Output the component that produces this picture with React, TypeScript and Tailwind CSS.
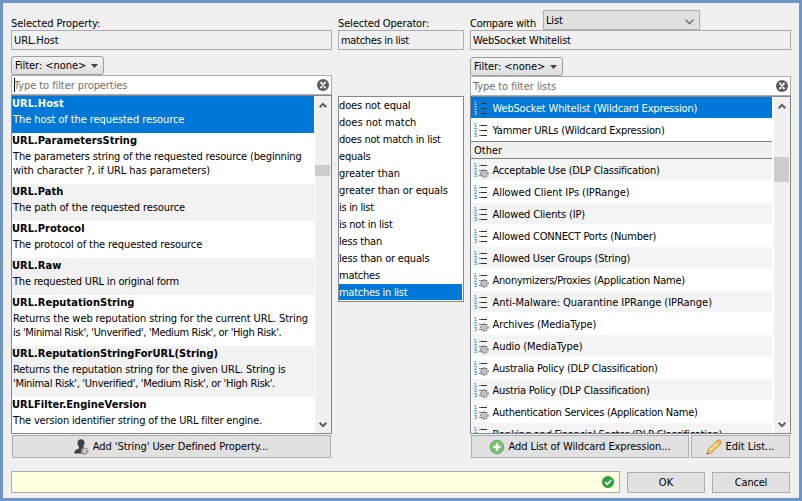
import type { ReactNode } from "react";

type Line = { text: string; cls: string };
type Property = { name: string; lines: Line[] };

const properties: Property[] = [
  { name: "URL.Host", lines: [{ text: "The host of the requested resource", cls: "tracking-[-0.08px]" }] },
  {
    name: "URL.ParametersString",
    lines: [
      { text: "The parameters string of the requested resource (beginning", cls: "tracking-[-0.16px]" },
      { text: "with character ?, if URL has parameters)", cls: "tracking-[-0.08px]" },
    ],
  },
  { name: "URL.Path", lines: [{ text: "The path of the requested resource", cls: "tracking-[-0.09px]" }] },
  { name: "URL.Protocol", lines: [{ text: "The protocol of the requested resource", cls: "tracking-[-0.1px]" }] },
  { name: "URL.Raw", lines: [{ text: "The requested URL in original form", cls: "tracking-[-0.2px]" }] },
  {
    name: "URL.ReputationString",
    lines: [
      { text: "Returns the web reputation string for the current URL. String", cls: "tracking-[-0.09px]" },
      { text: "is 'Minimal Risk', 'Unverified', 'Medium Risk', or 'High Risk'.", cls: "tracking-[-0.36px]" },
    ],
  },
  {
    name: "URL.ReputationStringForURL(String)",
    lines: [
      { text: "Returns the reputation string for the given URL. String is", cls: "tracking-[-0.12px]" },
      { text: "'Minimal Risk', 'Unverified', 'Medium Risk', or 'High Risk'.", cls: "tracking-[-0.3px]" },
    ],
  },
  {
    name: "URLFilter.EngineVersion",
    lines: [{ text: "The version identifier string of the URL filter engine.", cls: "tracking-[-0.16px]" }],
  },
];

const operators: Line[] = [
  { text: "does not equal", cls: "tracking-[-0.15px]" },
  { text: "does not match", cls: "" },
  { text: "does not match in list", cls: "tracking-[-0.25px]" },
  { text: "equals", cls: "tracking-[-0.2px]" },
  { text: "greater than", cls: "tracking-[-0.08px]" },
  { text: "greater than or equals", cls: "tracking-[-0.1px]" },
  { text: "is in list", cls: "tracking-[-0.3px]" },
  { text: "is not in list", cls: "tracking-[-0.25px]" },
  { text: "less than", cls: "tracking-[-0.2px]" },
  { text: "less than or equals", cls: "tracking-[-0.18px]" },
  { text: "matches", cls: "tracking-[-0.25px]" },
  { text: "matches in list", cls: "tracking-[-0.27px]" },
];

const lists: (Line & { gear?: boolean })[] = [
  { text: "Acceptable Use (DLP Classification)", cls: "tracking-[-0.23px]", gear: true },
  { text: "Allowed Client IPs (IPRange)", cls: "tracking-[-0.06px]" },
  { text: "Allowed Clients (IP)", cls: "tracking-[-0.15px]" },
  { text: "Allowed CONNECT Ports (Number)", cls: "tracking-[-0.18px]" },
  { text: "Allowed User Groups (String)", cls: "tracking-[-0.2px]" },
  { text: "Anonymizers/Proxies (Application Name)", cls: "tracking-[-0.23px]", gear: true },
  { text: "Anti-Malware: Quarantine IPRange (IPRange)", cls: "tracking-[-0.04px]" },
  { text: "Archives (MediaType)", cls: "tracking-[-0.08px]", gear: true },
  { text: "Audio (MediaType)", cls: "tracking-[-0.08px]", gear: true },
  { text: "Australia Policy (DLP Classification)", cls: "tracking-[-0.24px]", gear: true },
  { text: "Austria Policy (DLP Classification)", cls: "tracking-[-0.23px]", gear: true },
  { text: "Authentication Services (Application Name)", cls: "tracking-[-0.26px]", gear: true },
  { text: "Banking and Financial Sector (DLP Classification)", cls: "tracking-[-0.25px]" },
];

function Gear({ x, y, r, fill }: { x: number; y: number; r: number; fill: string }) {
  return (
    <g transform={`translate(${x} ${y})`}>
      <circle r={r - 0.7} fill="none" stroke="#808080" strokeWidth="1.4" strokeDasharray="1.4 1.3" />
      <circle r={r - 1.3} fill={fill} stroke="#8c8c8c" strokeWidth="0.8" />
      <circle r="1" fill="#fff" stroke="#777" strokeWidth="0.6" />
    </g>
  );
}

function ListIcon({ gear }: { gear?: boolean }) {
  return (
    <svg width="16" height="16" viewBox="0 0 16 16" className="shrink-0">
      <g fill="none" stroke="#7fb0e8" strokeWidth="1" shapeRendering="crispEdges">
        <path d="M0 1.5h2M1.5 1v3M0 4.5h3" />
        <path d="M0 6.5h3M2 7.5h1M1 8.5h1M0 9.5h3" />
        <path d="M0 11.5h3M1 12.5h2M2 13.5h1M0 14.5h3" />
      </g>
      <g strokeWidth="1" shapeRendering="crispEdges">
        <path d="M5 3.5h2M5 8.5h2M5 13.5h2" stroke="#7c7c7c" />
        <path d="M7 3.5h6M7 8.5h6M7 13.5h6" stroke="#303030" />
      </g>
      {gear && <Gear x={10.3} y={11.5} r={4.4} fill="#d0d0d0" />}
    </svg>
  );
}

function Clear() {
  return (
    <svg width="12" height="12" viewBox="0 0 12 12" className="shrink-0">
      <circle cx="6" cy="6" r="6" fill="#5c5c5c" />
      <path d="M3.9 3.7L8.1 8.3M8.1 3.7L3.9 8.3M3.2 3.5h2M6.8 3.5h2M3.2 8.5h2M6.8 8.5h2" stroke="#fff" strokeWidth="1.3" />
    </svg>
  );
}

function Arrow({ down }: { down?: boolean }) {
  return (
    <svg width="8" height="6" viewBox="0 0 8 6" className="mx-auto shrink-0">
      <path d={down ? "M0.7 0.8L4 4.1L7.3 0.8" : "M0.7 5.2L4 1.9L7.3 5.2"} fill="none" stroke="#5a5a5a" strokeWidth="2" />
    </svg>
  );
}

function Box({ children }: { children: ReactNode }) {
  return <div className="h-5 border border-[#abadb3] pl-[2px] leading-5">{children}</div>;
}

function FilterButton() {
  return (
    <div className="flex h-[19px] w-[93px] items-center rounded-[3px] border border-[#a0a0a0] bg-linear-to-b from-[#f2f2f2] to-[#dedede] pl-[3px]">
      <span className="tracking-[-0.05px]">Filter: &lt;none&gt;</span>
      <svg width="7" height="4" viewBox="0 0 7 4" className="ml-auto mr-[5px]">
        <path d="M0 0h7L3.5 4z" fill="#444" />
      </svg>
    </div>
  );
}

function Search({ text, caret }: { text: string; caret?: boolean }) {
  return (
    <div className="flex h-5 items-center border border-[#abadb3] bg-white pl-[2px] pr-[2px] text-[#707070]">
      {caret && <span className="-mr-px h-[14px] w-px bg-black" />}
      <span className="grow pt-px tracking-[-0.08px]">{text}</span>
      <Clear />
    </div>
  );
}

function ScrollBar({ lead, thumb }: { lead: string; thumb: string }) {
  return (
    <div className="flex w-4 shrink-0 flex-col justify-between bg-[#f0f0f0] pb-[5px] pr-px pt-[6px]">
      <div>
        <Arrow />
        <div className={lead} />
        <div className={`bg-[#cdcdcd] ${thumb}`} />
      </div>
      <Arrow down />
    </div>
  );
}

const button = "flex items-center justify-center border border-[#adadad] bg-[#e1e1e1]";

export default function App() {
  return (
    <div className="h-[501px] w-[802px] overflow-hidden whitespace-nowrap border-[3px] border-[#7094c4] bg-[#f0f0f0] pl-2 font-['DejaVu_Sans_Condensed','DejaVu_Sans',sans-serif] text-[11px] leading-[14px] text-black [font-stretch:condensed]">
      <div className="flex h-[468px]">
        <section className="w-[321px] pt-[13px]">
          <div className="h-[14px] leading-4 tracking-[-0.06px]">Selected Property:</div>
          <Box>
            <span className="tracking-[-0.1px]">URL.Host</span>
          </Box>
          <div className="pt-[6px]">
            <FilterButton />
          </div>
          <Search text="Type to filter properties" caret />
          <div className="flex h-[339px] overflow-hidden border border-[#828790] bg-white">
            <div className="mr-px w-[302px]">
              {properties.map((p, i) => (
                <div
                  key={p.name}
                  className={`pt-px ${p.lines.length === 2 ? "h-[51px]" : "h-[37px]"} ${
                    i === 0 ? "bg-[#0078d7] text-white" : i % 2 === 0 ? "bg-[#f2f2f2]" : "bg-white"
                  }`}
                >
                  <div className="h-4 font-bold tracking-[0.03px]">{p.name}</div>
                  {p.lines.map((l) => (
                    <div key={l.text} className="h-[14px] pl-px">
                      <span className={l.cls}>{l.text}</span>
                    </div>
                  ))}
                </div>
              ))}
            </div>
            <ScrollBar lead="h-[57px]" thumb="h-[11px]" />
          </div>
          <div className={`${button} ml-px mt-px h-[23px] w-[319px] gap-1 pr-[2px]`}>
            <svg width="16" height="16" viewBox="0 0 16 16">
              <path d="M4.6 4a3.4 3.7 0 0 1 6.8 0c0 2-.8 3-1.4 4v1.5l4 1.5v3.5H1.2c0-2.5 1-3.5 4.8-5V8C5.4 7 4.6 6 4.6 4z" fill="#404040" />
              <Gear x={11.5} y={12} r={3.9} fill="#e4e4e4" />
            </svg>
            <span className="tracking-[-0.05px]">Add 'String' User Defined Property...</span>
          </div>
        </section>

        <section className="ml-[6px] w-[126px] pt-[13px]">
          <div className="h-[14px] leading-4 tracking-[-0.14px]">Selected Operator:</div>
          <Box>
            <span className="tracking-[-0.3px]">matches in list</span>
          </Box>
          <div className="mt-[46px] h-[206px] border border-[#828790] bg-white pr-px">
            {operators.map((o) => (
              <div key={o.text} className="h-[17px]">
                <div className={`h-4 leading-[18px] ${o.text === "matches in list" ? "bg-[#0078d7] text-white" : ""}`}>
                  <span className={o.cls}>{o.text}</span>
                </div>
              </div>
            ))}
          </div>
        </section>

        <section className="ml-[6px] w-[321px] pt-[7px]">
          <div className="flex h-5">
            <div className="w-[73px] pt-[7px] tracking-[-0.25px]">Compare with</div>
            <div className="flex w-[157px] items-center justify-between border border-[#adadad] bg-[#e1e1e1] pl-[2px] pr-[5px]">
              <span className="pt-px tracking-[-0.15px]">List</span>
              <svg width="9" height="6" viewBox="0 0 9 6" className="mt-[3px]">
                <path d="M0.5 0.7L4.5 4.7L8.5 0.7" fill="none" stroke="#505050" strokeWidth="1.1" />
              </svg>
            </div>
          </div>
          <Box>
            <span className="tracking-[-0.17px]">WebSocket Whitelist</span>
          </Box>
          <div className="pt-[7px]">
            <FilterButton />
          </div>
          <Search text="Type to filter lists" />
          <div className="flex h-[338px] overflow-hidden border border-[#828790] bg-white">
            <div className="mr-[2px] w-[301px]">
              <div className="flex h-[21px] items-center gap-[2.5px] bg-[#0078d7] pl-[3px] text-white">
                <ListIcon />
                <span className="pt-[3px] tracking-[-0.17px]">WebSocket Whitelist (Wildcard Expression)</span>
              </div>
              <div className="flex h-[23px] items-center gap-[2.5px] pl-[3px]">
                <ListIcon />
                <span className="pt-[3px] tracking-[-0.2px]">Yammer URLs (Wildcard Expression)</span>
              </div>
              <div className="h-[18px] border-y border-[#808080] bg-[#f0f0f0] pl-[3px] leading-[17px]">Other</div>
              {lists.map((l, i) => (
                <div key={l.text} className="h-[22px]">
                  <div className={`flex h-[21px] items-center gap-[2.5px] pl-[3px] ${i % 2 === 0 ? "bg-[#f4f4f4]" : ""}`}>
                    <ListIcon gear={l.gear} />
                    <span className={`pt-[3px] ${l.cls}`}>{l.text}</span>
                  </div>
                </div>
              ))}
            </div>
            <ScrollBar lead="h-[48px]" thumb="h-[25px]" />
          </div>
          <div className="flex gap-[2px] pl-px pt-px">
            <div className={`${button} h-[23px] w-[218px] gap-1 pr-px`}>
              <svg width="16" height="16" viewBox="0 0 16 16">
                <circle cx="8" cy="8" r="6.7" fill="#6dbb62" stroke="#4fa14a" />
                <circle cx="8" cy="8" r="5.6" fill="none" stroke="#a8d8a0" strokeWidth="0.8" />
                <path d="M8 4.3v7.4M4.3 8h7.4" stroke="#fff" strokeWidth="2.4" />
              </svg>
              <span className="tracking-[-0.08px]">Add List of Wildcard Expression...</span>
            </div>
            <div className={`${button} h-[23px] w-[99px] gap-[3px]`}>
              <svg width="16" height="16" viewBox="0 0 16 16">
                <path d="M1 15l1.3-4.5L11.3 1.3Q13 .4 14.5 1.7T14.8 4.8L5.5 13.8z" fill="#fbc65a" stroke="#c08432" strokeWidth="0.9" />
                <path d="M3.5 11.5L12 3" stroke="#ffe9ab" strokeWidth="1.4" />
                <path d="M10.5 2.2l3.4 3.4" stroke="#d9a274" strokeWidth="1.2" />
                <path d="M1 15l1.2-4 3 2.8z" fill="#f6dcb8" stroke="#b07d3c" strokeWidth="0.5" />
                <path d="M0.8 15.2l.6-1.8 1.3 1.2z" fill="#333" />
              </svg>
              <span>Edit List...</span>
            </div>
          </div>
        </section>
      </div>

      <footer className="flex">
        <div className="flex h-[22px] w-[609px] items-center justify-end border border-[#abadb3] bg-[#ffffe1] pr-[5px]">
          <svg width="12" height="12" viewBox="0 0 12 12">
            <circle cx="6" cy="6" r="5.6" fill="#27a43b" stroke="#188a2c" strokeWidth="0.7" />
            <path d="M3 6.1l2.2 2.2L9.2 4" fill="none" stroke="#fff" strokeWidth="1.8" />
          </svg>
        </div>
        <div className={`${button} ml-[7px] mt-px h-[21px] w-[78px]`}>OK</div>
        <div className={`${button} ml-[7px] mt-px h-[21px] w-[78px] tracking-[-0.2px]`}>Cancel</div>
      </footer>
    </div>
  );
}
